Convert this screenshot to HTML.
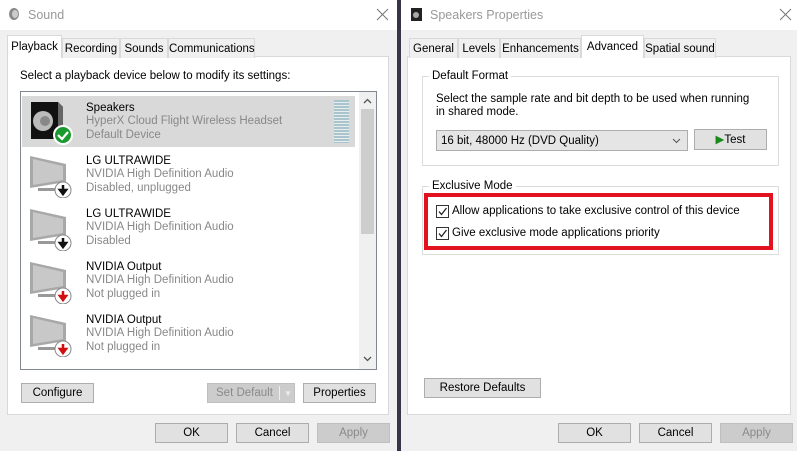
<!DOCTYPE html>
<html><head><meta charset="utf-8"><style>
*{box-sizing:border-box;margin:0;padding:0}
body{width:797px;height:451px;overflow:hidden;background:#3a3246;font-family:"Liberation Sans",sans-serif;font-size:11.5px;color:#000;position:relative}
.a{position:absolute}
.win{background:#f0f0f0}
.title{background:#fff;height:30px}
.tt{color:#999;font-size:12.5px;top:8px}
.tab{position:absolute;background:#f0f0f0;border:1px solid #d9d9d9;border-bottom:none;height:20px;text-align:center;line-height:20px;font-size:11.5px}
.tab.on{background:#fff;border-color:#d9d9d9;height:23px;line-height:22px;z-index:2}
.panel{background:#fff;border:1px solid #d9d9d9}
.btn{position:absolute;background:#e1e1e1;border:1px solid #adadad;text-align:center;line-height:19px;height:20px}
.dis{background:#ccc;border-color:#bfbfbf;color:#8a8a8a}
.row{position:absolute;left:22px;width:333px;height:51px}
.n{position:absolute;left:64px;top:6px;line-height:13.3px}
.n span{color:#888}
.grp{position:absolute;border:1px solid #dcdcdc}
.gl{position:absolute;background:#fff;padding:0 3px}
.cb{position:absolute;width:13px;height:13px;border:1px solid #333;background:#fff}
</style></head><body>
<div class="a win" style="left:0;top:0;width:397px;height:451px">
 <div class="title a" style="left:0;top:0;width:397px"></div>
 <svg class="a" style="left:8px;top:7px" width="12" height="14"><ellipse cx="6" cy="7" rx="5" ry="6" fill="#888"/><ellipse cx="7" cy="7" rx="3" ry="4" fill="#ccc"/></svg>
 <div class="a tt" style="left:28px">Sound</div>
 <svg class="a" style="left:376px;top:8px" width="13" height="13"><path d="M1 1L12 12M12 1L1 12" stroke="#777" stroke-width="1"/></svg>
 <div class="a panel" style="left:7px;top:56px;width:382px;height:359px"></div>
 <div class="tab on" style="left:7px;top:35px;width:55px">Playback</div>
 <div class="tab" style="left:62px;top:38px;width:58px">Recording</div>
 <div class="tab" style="left:120px;top:38px;width:48px">Sounds</div>
 <div class="tab" style="left:168px;top:38px;width:87px">Communications</div>
 <div class="a" style="left:20px;top:70px">Select a playback device below to modify its settings:</div>
 <div class="a" style="left:20px;top:91px;width:357px;height:279px;background:#fff;border:1px solid #828790;overflow:hidden">
  <div class="a" style="left:338px;top:0;width:17px;height:277px;background:#f0f0f0"></div>
  <div class="a" style="left:340px;top:17px;width:13px;height:125px;background:#cdcdcd"></div>
  <svg class="a" style="left:342px;top:6px" width="9" height="6"><path d="M1 5L4.5 1.5L8 5" stroke="#555" fill="none" stroke-width="1.3"/></svg>
  <svg class="a" style="left:342px;top:264px" width="9" height="6"><path d="M1 1L4.5 4.5L8 1" stroke="#555" fill="none" stroke-width="1.3"/></svg>
 </div>
 <div class="row" style="top:96px;background:#d9d9d9">
  <svg class="a" style="left:6px;top:3px" width="46" height="46"><polygon points="3,3 30,3 35,8 35,40 3,40" fill="#111"/><polygon points="30,3 35,8 35,40 30,40" fill="#666"/><circle cx="15" cy="22" r="10" fill="#bbb"/><circle cx="17" cy="22" r="5" fill="#888"/><circle cx="35" cy="36" r="9" fill="#1a9a2e" stroke="#fff" stroke-width="2"/><path d="M30 36l4 4 6-7" stroke="#fff" stroke-width="2.2" fill="none"/></svg>
  <div class="n">Speakers<br><span>HyperX Cloud Flight Wireless Headset<br>Default Device</span></div>
  <div class="a" style="left:312px;top:4px;width:15px;height:43px;background:repeating-linear-gradient(#a9c4cc 0 2px,#e6eef0 2px 3px)"></div>
 </div>
 <div class="row" style="top:149px">
  <svg class="a" style="left:6px;top:3px" width="46" height="46"><polygon points="2,4 38,12 38,30 2,36" fill="#a8a8a8"/><polygon points="5,7 35,14 35,28 5,33" fill="#c8c8c8"/><rect x="10" y="36" width="18" height="3" fill="#999"/><circle cx="35" cy="38" r="8" fill="#fff" stroke="#888"/><path d="M35 33v6M32 38l3 4 3-4z" stroke="#111" stroke-width="2.5" fill="#111"/></svg>
  <div class="n">LG ULTRAWIDE<br><span>NVIDIA High Definition Audio<br>Disabled, unplugged</span></div>
 </div>
 <div class="row" style="top:202px">
  <svg class="a" style="left:6px;top:3px" width="46" height="46"><polygon points="2,4 38,12 38,30 2,36" fill="#a8a8a8"/><polygon points="5,7 35,14 35,28 5,33" fill="#c8c8c8"/><rect x="10" y="36" width="18" height="3" fill="#999"/><circle cx="35" cy="38" r="8" fill="#fff" stroke="#888"/><path d="M35 33v6M32 38l3 4 3-4z" stroke="#111" stroke-width="2.5" fill="#111"/></svg>
  <div class="n">LG ULTRAWIDE<br><span>NVIDIA High Definition Audio<br>Disabled</span></div>
 </div>
 <div class="row" style="top:255px">
  <svg class="a" style="left:6px;top:3px" width="46" height="46"><polygon points="2,4 38,12 38,30 2,36" fill="#a8a8a8"/><polygon points="5,7 35,14 35,28 5,33" fill="#c8c8c8"/><rect x="10" y="36" width="18" height="3" fill="#999"/><circle cx="35" cy="38" r="8" fill="#fff" stroke="#888"/><path d="M35 33v6M32 38l3 4 3-4z" stroke="#d01010" stroke-width="2.5" fill="#d01010"/></svg>
  <div class="n">NVIDIA Output<br><span>NVIDIA High Definition Audio<br>Not plugged in</span></div>
 </div>
 <div class="row" style="top:308px">
  <svg class="a" style="left:6px;top:3px" width="46" height="46"><polygon points="2,4 38,12 38,30 2,36" fill="#a8a8a8"/><polygon points="5,7 35,14 35,28 5,33" fill="#c8c8c8"/><rect x="10" y="36" width="18" height="3" fill="#999"/><circle cx="35" cy="38" r="8" fill="#fff" stroke="#888"/><path d="M35 33v6M32 38l3 4 3-4z" stroke="#d01010" stroke-width="2.5" fill="#d01010"/></svg>
  <div class="n">NVIDIA Output<br><span>NVIDIA High Definition Audio<br>Not plugged in</span></div>
 </div>
 <div class="btn" style="left:21px;top:383px;width:73px">Configure</div>
 <div class="btn dis" style="left:207px;top:383px;width:88px;text-align:left;padding-left:8px">Set Default<span style="position:absolute;left:71px;top:2px;height:14px;border-left:1px solid #eee"></span><span style="position:absolute;left:76px;top:0;font-size:8px;color:#eee">▼</span></div>
 <div class="btn" style="left:303px;top:383px;width:73px">Properties</div>
 <div class="btn" style="left:155px;top:423px;width:73px">OK</div>
 <div class="btn" style="left:236px;top:423px;width:73px">Cancel</div>
 <div class="btn dis" style="left:317px;top:423px;width:73px">Apply</div>
</div>
<div class="a win" style="left:401px;top:0;width:396px;height:451px">
 <div class="title a" style="left:0;top:0;width:396px"></div>
 <svg class="a" style="left:10px;top:8px" width="11" height="13"><rect width="11" height="13" fill="#222"/><circle cx="5" cy="7" r="3" fill="#aaa"/></svg>
 <div class="a tt" style="left:29px">Speakers Properties</div>
 <svg class="a" style="left:378px;top:8px" width="13" height="13"><path d="M1 1L12 12M12 1L1 12" stroke="#777" stroke-width="1"/></svg>
 <div class="a panel" style="left:6px;top:56px;width:384px;height:359px"></div>
 <div class="tab" style="left:8px;top:38px;width:49px">General</div>
 <div class="tab" style="left:57px;top:38px;width:42px">Levels</div>
 <div class="tab" style="left:99px;top:38px;width:81px">Enhancements</div>
 <div class="tab on" style="left:180px;top:35px;width:63px">Advanced</div>
 <div class="tab" style="left:243px;top:38px;width:72px">Spatial sound</div>
 <div class="grp" style="left:21px;top:76px;width:357px;height:90px"></div>
 <div class="gl" style="left:28px;top:70px">Default Format</div>
 <div class="a" style="left:35px;top:93px;line-height:13px">Select the sample rate and bit depth to be used when running<br>in shared mode.</div>
 <div class="a" style="left:35px;top:130px;width:252px;height:21px;background:#e5e5e5;border:1px solid #adadad;line-height:20px;padding-left:4px">16 bit, 48000 Hz (DVD Quality)<svg style="position:absolute;right:6px;top:7px" width="9" height="6"><path d="M1 1L4.5 4.5L8 1" stroke="#555" fill="none"/></svg></div>
 <div class="btn" style="left:293px;top:129px;width:73px;height:21px;line-height:20px"><span style="color:#1a8a1a">▶</span>Test</div>
 <div class="grp" style="left:21px;top:186px;width:357px;height:69px"></div>
 <div class="gl" style="left:28px;top:180px;background:#fff">Exclusive Mode</div>
 <div class="a" style="left:23px;top:193px;width:349px;height:57px;border:4px solid #e3121f"></div>
 <div class="cb" style="left:35px;top:205px"></div><svg class="a" style="left:36px;top:206px" width="11" height="11"><path d="M2 5.5L4.5 8.5L9.5 2" stroke="#222" stroke-width="1.3" fill="none"/></svg>
 <div class="a" style="left:51px;top:205px">Allow applications to take exclusive control of this device</div>
 <div class="cb" style="left:35px;top:227px"></div><svg class="a" style="left:36px;top:228px" width="11" height="11"><path d="M2 5.5L4.5 8.5L9.5 2" stroke="#222" stroke-width="1.3" fill="none"/></svg>
 <div class="a" style="left:51px;top:227px">Give exclusive mode applications priority</div>
 <div class="btn" style="left:23px;top:378px;width:117px">Restore Defaults</div>
 <div class="btn" style="left:157px;top:423px;width:73px">OK</div>
 <div class="btn" style="left:238px;top:423px;width:73px">Cancel</div>
 <div class="btn dis" style="left:319px;top:423px;width:73px">Apply</div>
</div>
</body></html>
